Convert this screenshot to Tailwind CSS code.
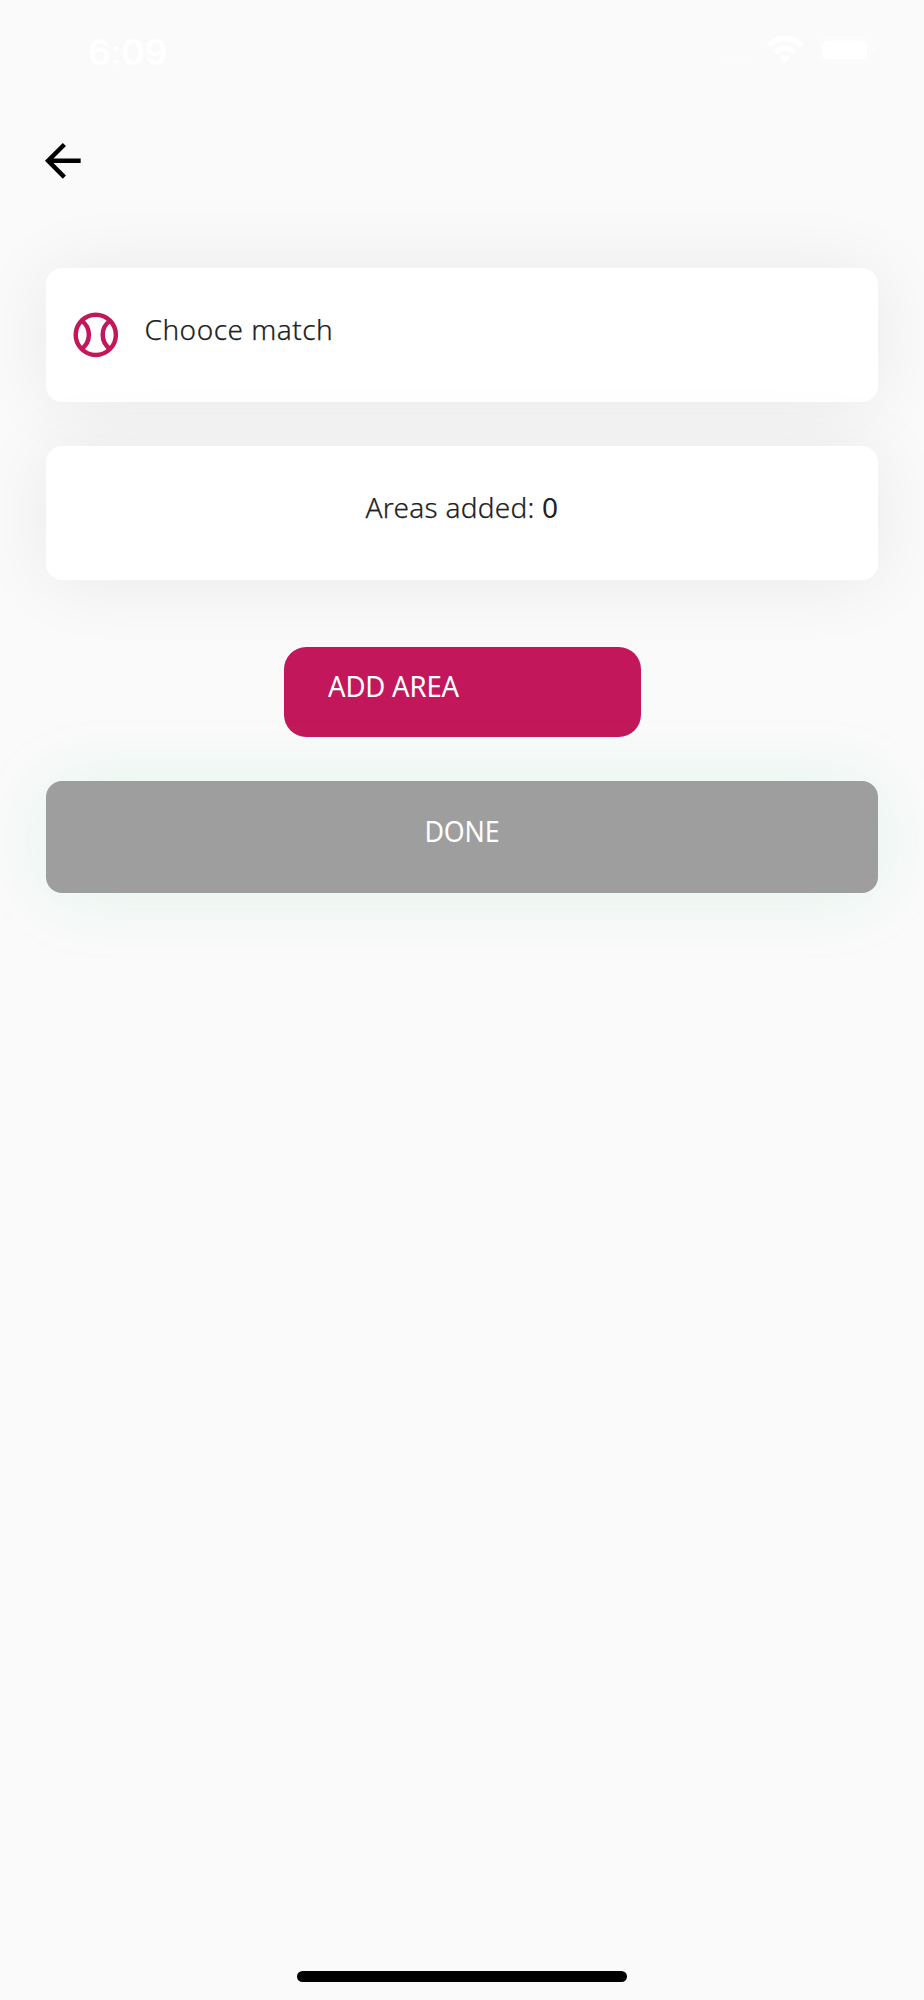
<!DOCTYPE html>
<html lang="en">
<head>
<meta charset="utf-8">
<meta name="viewport" content="width=device-width, initial-scale=1">
<title>Choose match</title>
<script src="https://cdn.jsdelivr.net/npm/@tailwindcss/browser@4"></script>
</head>
<body class="bg-[#fafafa]">
<div class="flex h-[2000px] w-[924px] flex-col overflow-hidden bg-[#fafafa] font-['Noto_Sans',sans-serif] text-[#212121]">
  <header class="flex h-[100px] shrink-0 items-center justify-between pr-[48px] pl-[88px] text-white">
    <span class="mt-[3px] font-['Inter',sans-serif] text-[36px] leading-[40px] font-semibold tracking-[-0.6px]">6:09</span>
    <div class="flex items-center">
      <svg class="h-[10px] w-[34px] translate-y-[9px] opacity-30" viewBox="0 0 34 10" fill="currentColor"><circle cx="5" cy="5" r="3"/><circle cx="16" cy="5" r="3"/><circle cx="27" cy="5" r="3"/></svg>
      <svg class="mr-[14px] ml-[10px] h-[28px] w-[38px]" viewBox="0 0 38 28" fill="none" stroke="currentColor" stroke-width="5.5"><path d="M2.5 9.5Q19-5 35.500 9.500M9 16.500Q19 8 29 16.500"/><path d="M13.500 21.500Q19 17 24.500 21.500L19 27Z" fill="currentColor" stroke="none"/></svg>
      <svg class="h-[28px] w-[58px]" viewBox="0 0 58 28" fill="none"><rect x="1.500" y="1.500" width="50" height="25" rx="8" stroke="white" stroke-opacity=".4" stroke-width="2.500"/><rect x="4" y="4.500" width="45" height="19" rx="5" fill="white"/><path d="M54.500 9.500q3 1 3 4.500t-3 4.500z" fill="white" fill-opacity=".5"/></svg>
    </div>
  </header>
  <nav class="flex h-[121px] shrink-0 items-center pl-[36px]">
    <svg class="h-[53.6px] w-[53.6px] text-black" viewBox="0 0 24 24" fill="currentColor"><path d="M20 11H7.830l5.590-5.590L12 4l-8 8 8 8 1.410-1.410L7.830 13H20v-2z"/></svg>
  </nav>
  <main class="flex flex-col items-center px-[46.4px] pt-[46.8px]">
    <section class="flex h-[134px] w-full items-center rounded-[16px] bg-white pl-[22.500px] shadow-[0_2px_74px_rgba(0,0,0,0.07)]">
      <svg class="h-[53.6px] w-[53.6px] shrink-0 text-[#c2185b]" viewBox="0 0 24 24" fill="none" stroke="currentColor" stroke-width="2"><circle cx="12" cy="12" r="9"/><path d="M5.600 5.700C7.800 7.200 8.900 9.500 8.900 12s-1.100 4.800-3.300 6.300M18.400 5.700C16.200 7.200 15.100 9.500 15.100 12s1.100 4.800 3.300 6.300"/></svg>
      <span class="-mt-[12px] ml-[22px] text-[28px] leading-[40px] font-light tracking-[0.5px] [-webkit-text-stroke:0.25px_#212121]">Chooce match</span>
    </section>
    <section class="mt-[44.600px] flex h-[134px] w-full items-center justify-center rounded-[16px] bg-white shadow-[0_2px_74px_rgba(0,0,0,0.07)]">
      <span class="-mt-[12px] text-[28px] leading-[40px] font-light tracking-[0.25px] [-webkit-text-stroke:0.25px_#212121]">Areas added: <span class="font-normal [-webkit-text-stroke:0px]">0</span></span>
    </section>
    <button class="mt-[67px] flex h-[89.300px] w-[357px] items-center rounded-[22.300px] bg-[#c2185b] pl-[44.600px] text-white">
      <span class="-mt-[12px] origin-left scale-x-[0.965] text-[28.500px] leading-[40px] tracking-[-0.2px]">ADD AREA</span>
    </button>
    <button class="mt-[44.600px] flex h-[111.600px] w-full items-center justify-center rounded-[16px] bg-[#9e9e9e] text-white shadow-[0_2px_74px_rgba(0,200,110,0.1)]">
      <span class="-mt-[12px] scale-x-[0.94] text-[28.500px] leading-[40px] tracking-[-0.2px]">DONE</span>
    </button>
  </main>
  <footer class="mt-auto flex justify-center pb-[18px]"><div class="h-[11px] w-[330px] rounded-full bg-black"></div></footer>
</div>
</body>
</html>
